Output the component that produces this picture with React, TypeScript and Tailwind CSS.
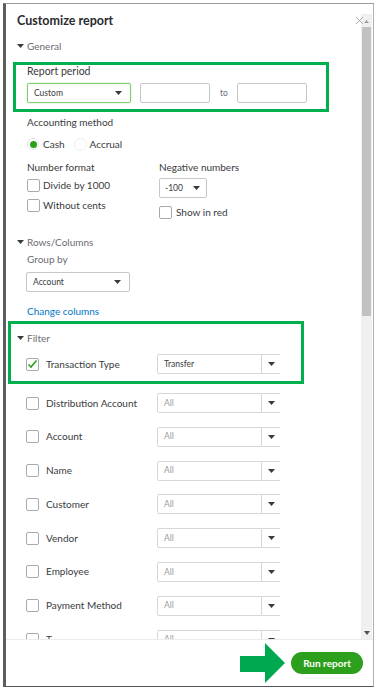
import { X } from "lucide-react";

const Caret = () => (
  <svg width="7" height="4" viewBox="0 0 7 4" className="shrink-0">
    <path d="M0 0 L7 0 L3.5 4 Z" fill="#393a3d" />
  </svg>
);

const Checkbox = ({ checked = false }: { checked?: boolean }) => (
  <div className="w-[13px] h-[13px] rounded-[2px] border border-[#a8aab0] bg-white flex items-center justify-center shrink-0">
    {checked && (
      <svg width="11" height="10" viewBox="0 0 11 10">
        <path d="M1.5 5.5 L4 8 L9.5 1.5" fill="none" stroke="#2ca01c" strokeWidth="1.6" />
      </svg>
    )}
  </div>
);

const Select = ({ value, className }: { value: string; className: string }) => (
  <div
    className={`h-[20px] border border-[#c4c6cb] rounded-[2px] bg-white flex items-center justify-between pl-[6px] pr-[8px] ${className}`}
  >
    <span className="text-[8.5px] text-[#393a3d]">{value}</span>
    <Caret />
  </div>
);

const SectionToggle = ({ label }: { label: string }) => (
  <div className="flex items-center gap-[3px] h-[12px] leading-[12px]">
    <Caret />
    <span className="text-[10px] text-[#6b6c72]">{label}</span>
  </div>
);

const FilterRow = ({ label, value, checked = false }: { label: string; value: string; checked?: boolean }) => (
  <div className="flex items-center h-[20px]">
    <div className="w-[131px] flex items-center gap-[7px]">
      <Checkbox checked={checked} />
      <span className="text-[10px] text-[#393a3d]">{label}</span>
    </div>
    <div className="flex h-[20px]">
      <div className="w-[105px] h-[20px] border border-[#d4d7dc] rounded-l-[2px] bg-white flex items-center pl-[6px]">
        <span className={`text-[8.5px] ${checked ? "text-[#393a3d]" : "text-[#9a9ca2]"}`}>{value}</span>
      </div>
      <div className="w-[18px] h-[20px] border-t border-b border-[#d4d7dc] flex items-center justify-center bg-white">
        <Caret />
      </div>
    </div>
  </div>
);

const filters = [
  "Distribution Account",
  "Account",
  "Name",
  "Customer",
  "Vendor",
  "Employee",
  "Payment Method",
  "T",
];

export default function App() {
  return (
    <div className="w-[385px] h-[696px] bg-white pl-[3px] pt-[3px] font-['Lato',sans-serif]">
      <div className="relative w-[371px] h-[684px] border-t border-t-[#9a9a9a] border-r border-r-[#b0b0b0] border-b border-b-[#555] border-l-[3px] border-l-[#5e5e5e] flex flex-col">
        {/* Close */}
        <X className="absolute left-[347px] top-[10px] w-[13px] h-[13px] text-[#8d9096]" strokeWidth={1.4} />

        <div className="flex h-[635px] overflow-hidden">
          {/* Content */}
          <div className="flex-1 pl-[11px]">
            <div className="pt-[10px] h-[24px] text-[12.5px] leading-[14px] font-bold text-[#2a2b2e]">Customize report</div>

            <div className="mt-[12px]">
              <SectionToggle label="General" />
            </div>

            {/* Report period (highlighted) */}
            <div className="mt-[10px] -ml-[4px] w-[316px] border-[3px] border-[#00b04f] pl-[11px] pb-[6px]">
              <div className="text-[10.5px] leading-[12px] text-[#393a3d]">Report period</div>
              <div className="mt-[6px] flex items-center">
                <div className="w-[104px] h-[20px] border border-[#7fcf6f] rounded-[2px] shadow-[0_0_2px_#b9e6b0] flex items-center justify-between pl-[6px] pr-[8px]">
                  <span className="text-[8.5px] text-[#393a3d]">Custom</span>
                  <Caret />
                </div>
                <div className="ml-[9px] w-[70px] h-[20px] border border-[#c4c6cb] rounded-[2px]" />
                <span className="ml-[10px] w-[17px] text-[8.5px] text-[#6b6c72]">to</span>
                <div className="w-[70px] h-[20px] border border-[#c4c6cb] rounded-[2px]" />
              </div>
            </div>

            <div className="pl-[10px]">
              <div className="mt-[4px] text-[10px] leading-[12px] text-[#393a3d]">Accounting method</div>
              <div className="mt-[9px] h-[14px] flex items-center text-[10px] text-[#393a3d]">
                <div className="w-[12px] h-[12px] rounded-full border border-[#e3e4e7] flex items-center justify-center">
                  <div className="w-[7px] h-[7px] rounded-full bg-[#2ca01c]" />
                </div>
                <span className="ml-[4px]">Cash</span>
                <div className="ml-[9px] w-[13px] h-[13px] rounded-full border border-[#eceef1]" />
                <span className="ml-[3px]">Accrual</span>
              </div>

              <div className="mt-[10px] flex">
                <div className="w-[132px]">
                  <div className="text-[10px] leading-[12px] text-[#393a3d]">Number format</div>
                  <div className="mt-[5px] flex items-center gap-[3px] h-[14px]">
                    <Checkbox />
                    <span className="text-[10px] text-[#393a3d]">Divide by 1000</span>
                  </div>
                  <div className="mt-[6px] flex items-center gap-[3px] h-[14px]">
                    <Checkbox />
                    <span className="text-[10px] text-[#393a3d]">Without cents</span>
                  </div>
                </div>
                <div>
                  <div className="text-[10px] leading-[12px] text-[#393a3d]">Negative numbers</div>
                  <Select value="-100" className="mt-[5px] w-[48px] !pl-[5px] !pr-[6px]" />
                  <div className="mt-[8px] flex items-center gap-[4px] h-[13px]">
                    <Checkbox />
                    <span className="text-[10px] text-[#393a3d]">Show in red</span>
                  </div>
                </div>
              </div>
            </div>

            <div className="mt-[17px]">
              <SectionToggle label="Rows/Columns" />
            </div>
            <div className="pl-[10px]">
              <div className="mt-[5px] text-[10px] leading-[12px] text-[#6b6c72]">Group by</div>
              <Select value="Account" className="mt-[7px] w-[104px] -ml-[1px]" />
              <div className="mt-[13px] text-[10px] leading-[12px] text-[#0077c5]">Change columns</div>
            </div>

            {/* Filter (highlighted) */}
            <div className="mt-[4px] -ml-[9px] w-[296px] border-[3px] border-[#00b04f] pl-[6px] pt-[8px] pb-[7px]">
              <SectionToggle label="Filter" />
              <div className="mt-[10px] pl-[9px]">
                <FilterRow label="Transaction Type" value="Transfer" checked />
              </div>
            </div>

            <div className="pl-[9px] mt-[9px] flex flex-col gap-[13.8px]">
              {filters.map((f) => (
                <FilterRow key={f} label={f} value="All" />
              ))}
            </div>
          </div>

          {/* Scrollbar */}
          <div className="w-[11px] mt-[10px] mr-[1px] bg-[#f0f0f0] flex flex-col items-center">
            <svg width="5" height="3" viewBox="0 0 5 3" className="mt-[6px]">
              <path d="M0 3 L5 3 L2.5 0 Z" fill="#a0a0a0" />
            </svg>
            <div className="mt-[4px] w-[9px] h-[289px] bg-[#c1c1c1]" />
            <div className="flex-1" />
            <svg width="6" height="4" viewBox="0 0 6 4" className="mb-[4px]">
              <path d="M0 0 L6 0 L3 4 Z" fill="#505050" />
            </svg>
          </div>
        </div>

        {/* Footer */}
        <div className="flex-1 border-t border-[#ececec] flex items-center justify-end pr-[10px]">
          <svg width="46" height="40" viewBox="0 0 46 40" className="mr-[5px]">
            <path d="M0 13 L25 13 L25 0 L45 20 L25 40 L25 29 L0 29 Z" fill="#00a94f" />
          </svg>
          <div className="w-[72px] h-[22px] rounded-full bg-[#2ca01c] flex items-center justify-center text-[10px] font-bold text-white">
            Run report
          </div>
        </div>
      </div>
    </div>
  );
}
